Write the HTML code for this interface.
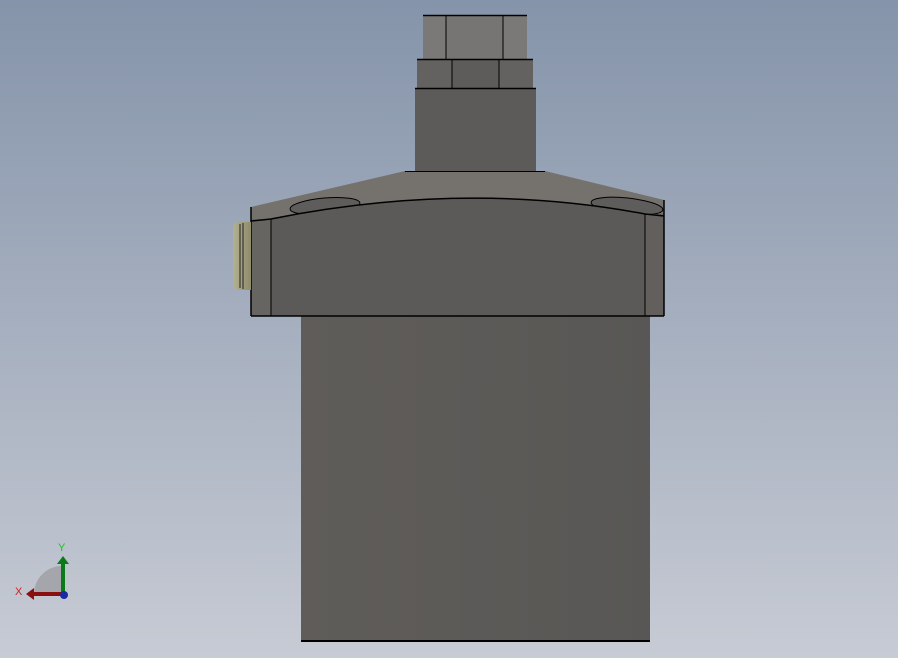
<!DOCTYPE html>
<html><head><meta charset="utf-8"><style>html,body{margin:0;padding:0;width:898px;height:658px;overflow:hidden}</style></head>
<body>
<svg width="898" height="658" viewBox="0 0 898 658" xmlns="http://www.w3.org/2000/svg">
<defs>
<linearGradient id="bg" x1="0" y1="0" x2="0" y2="1">
<stop offset="0" stop-color="#8594aa"/><stop offset="1" stop-color="#c7cbd4"/></linearGradient>
<linearGradient id="body" x1="0" y1="0" x2="1" y2="0">
<stop offset="0" stop-color="#5f5c59"/><stop offset="0.4" stop-color="#5d5b58"/><stop offset="1" stop-color="#585755"/></linearGradient>
<linearGradient id="conn" x1="0" y1="0" x2="1" y2="0">
<stop offset="0" stop-color="#b3b190"/><stop offset="1" stop-color="#8f8c6a"/></linearGradient>
</defs>
<rect width="898" height="658" fill="url(#bg)"/>
<rect x="301" y="316" width="349" height="325" fill="url(#body)"/>
<line x1="301" y1="641" x2="650" y2="641" stroke="#000" stroke-width="2"/>
<rect x="423" y="15" width="104" height="44" fill="#7b7977"/>
<rect x="446" y="15" width="57" height="44" fill="#777573"/>
<line x1="423" y1="15.5" x2="527" y2="15.5" stroke="#000" stroke-width="1.5"/>
<line x1="446" y1="15" x2="446" y2="59" stroke="#000"/>
<line x1="503" y1="15" x2="503" y2="59" stroke="#000"/>
<rect x="417" y="59" width="116" height="29" fill="#646260"/>
<rect x="452" y="59" width="47" height="29" fill="#5e5c5a"/>
<line x1="417" y1="59.5" x2="533" y2="59.5" stroke="#000" stroke-width="1.5"/>
<line x1="452" y1="59" x2="452" y2="88" stroke="#000"/>
<line x1="499" y1="59" x2="499" y2="88" stroke="#000"/>
<rect x="415" y="88" width="121" height="83" fill="#5d5b59"/>
<line x1="415" y1="88.5" x2="536" y2="88.5" stroke="#000" stroke-width="1.5"/>
<polygon points="405,171 545,171 664,200 664,216 251,221 251,207" fill="#75726e"/>
<line x1="405" y1="171.5" x2="545" y2="171.5" stroke="#000"/>
<ellipse cx="325" cy="206" rx="35" ry="8" transform="rotate(-5 325 206)" fill="#5f5d5b" stroke="#000"/>
<ellipse cx="627" cy="206" rx="36" ry="8" transform="rotate(6 627 206)" fill="#5f5d5b" stroke="#000"/>
<path d="M251,221 L271,219 Q465,180 645,214 L664,216 L664,316 L251,316 Z" fill="#5b5a58"/>
<rect x="251" y="219" width="20" height="97" fill="#676562"/>
<rect x="645" y="214" width="19" height="102" fill="#625f5d"/>
<path d="M251,221 L271,219 Q465,180 645,214 L664,216" fill="none" stroke="#000" stroke-width="1.5"/>
<line x1="251" y1="207" x2="251" y2="316" stroke="#000" stroke-width="1.5"/>
<line x1="664" y1="200" x2="664" y2="316" stroke="#000" stroke-width="1.5"/>
<line x1="271" y1="219" x2="271" y2="316" stroke="#000"/>
<line x1="645" y1="214" x2="645" y2="316" stroke="#000"/>
<line x1="251" y1="316" x2="664" y2="316" stroke="#000" stroke-width="1.5"/>
<path d="M251,222 L240,222 Q233,222 233,230 L233,282 Q233,290 240,290 L251,290 Z" fill="url(#conn)"/>
<line x1="240" y1="224" x2="240" y2="288" stroke="#222"/>
<line x1="243" y1="223" x2="243" y2="289" stroke="#222"/>
<path d="M34,594 A28,28 0 0 1 62,566 L62,594 Z" fill="#a4a6ab"/>
<line x1="63" y1="594" x2="63" y2="564" stroke="#0a7a1a" stroke-width="4"/>
<polygon points="57,564 69,564 63,556" fill="#0a7a1a"/>
<line x1="63" y1="594" x2="34" y2="594" stroke="#8a1010" stroke-width="4"/>
<polygon points="34,588 34,600 26,594" fill="#8a1010"/>
<circle cx="64" cy="595" r="4" fill="#1a2aa0"/>
<text x="58" y="551" font-family="Liberation Sans, sans-serif" font-size="11" fill="#1fbf2a">Y</text>
<text x="15" y="595" font-family="Liberation Sans, sans-serif" font-size="11" fill="#d02020">X</text>
</svg>
</body></html>
